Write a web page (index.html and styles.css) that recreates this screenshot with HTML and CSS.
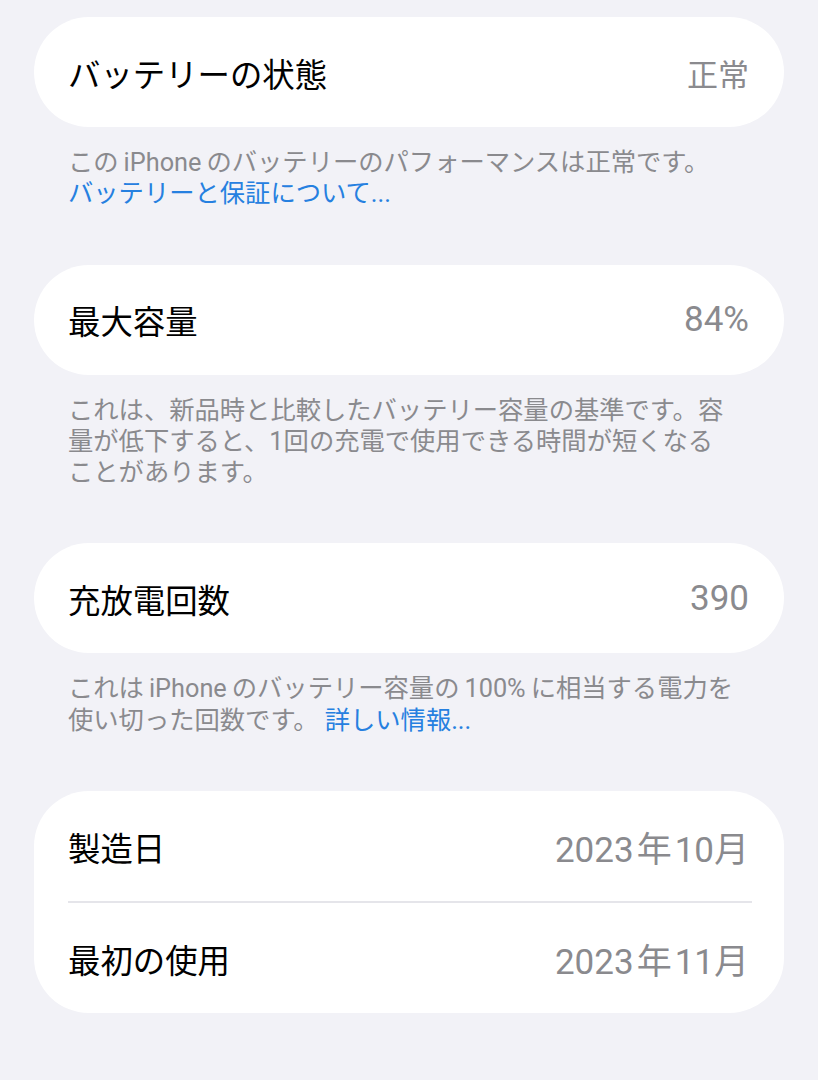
FILE: index.html
```html
<!DOCTYPE html>
<html lang="ja">
<head>
    <meta charset="UTF-8">
    <meta name="viewport" content="width=device-width, initial-scale=1.0">
    <title>バッテリーの状態</title>
    <link rel="stylesheet" href="styles.css">
</head>
<body>
    <div class="page">
        <div class="group">
            <div class="row">
                <span class="label">バッテリーの状態</span>
                <span class="value cjk">正常</span>
            </div>
        </div>
        <p class="footer">この<span class="en">iPhone</span>のバッテリーのパフォーマンスは正常です。<br><a class="link" href="#">バッテリーと保証について...</a></p>

        <div class="group">
            <div class="row">
                <span class="label">最大容量</span>
                <span class="value">84%</span>
            </div>
        </div>
        <p class="footer">これは、新品時と比較したバッテリー容量の基準です。容量が低下すると、1回の充電で使用できる時間が短くなる<span class="keep">ことがあります。</span></p>

        <div class="group">
            <div class="row">
                <span class="label">充放電回数</span>
                <span class="value">390</span>
            </div>
        </div>
        <p class="footer">これは<span class="en">iPhone</span>のバッテリー容量の<span class="en">100%</span>に相当する電力を使い切った回数です。 <a class="link" href="#">詳しい情報...</a></p>

        <div class="group">
            <div class="row">
                <span class="label">製造日</span>
                <span class="value">2023<span class="en">年</span>10月</span>
            </div>
            <div class="divider"></div>
            <div class="row">
                <span class="label">最初の使用</span>
                <span class="value">2023<span class="en">年</span>11月</span>
            </div>
        </div>
    </div>
</body>
</html>
```

FILE: styles.css
```css
body {
    margin: 0;
    background-color: #f2f2f7;
    font-family: Roboto, "Noto Sans CJK JP", sans-serif;
}

.page {
    padding: 17px 34px 0 34px;
}

.group {
    background-color: #fff;
    border-radius: 55px;
    overflow: hidden;
}

.row {
    display: flex;
    justify-content: space-between;
    align-items: center;
    height: 110px;
    padding: 0 35px 0 34px;
}

.label {
    font-size: 32.4px;
    color: #000;
}

.value {
    font-size: 35px;
    color: #8a8a8e;
}

.value.cjk {
    font-size: 31px;
}

.value .en {
    padding: 0 3px;
}

.divider {
    height: 2px;
    margin: 0 32px 0 34px;
    background-color: #e5e5ea;
}

.footer {
    margin: 0 0 55px 0;
    padding: 20px 42px 0 34px;
    font-size: 25.3px;
    line-height: 31.3px;
    color: #8a8a8e;
}

.footer .en {
    padding: 0 5px;
}

.keep {
    white-space: nowrap;
}

.link {
    color: #2680e0;
    text-decoration: none;
}
```
